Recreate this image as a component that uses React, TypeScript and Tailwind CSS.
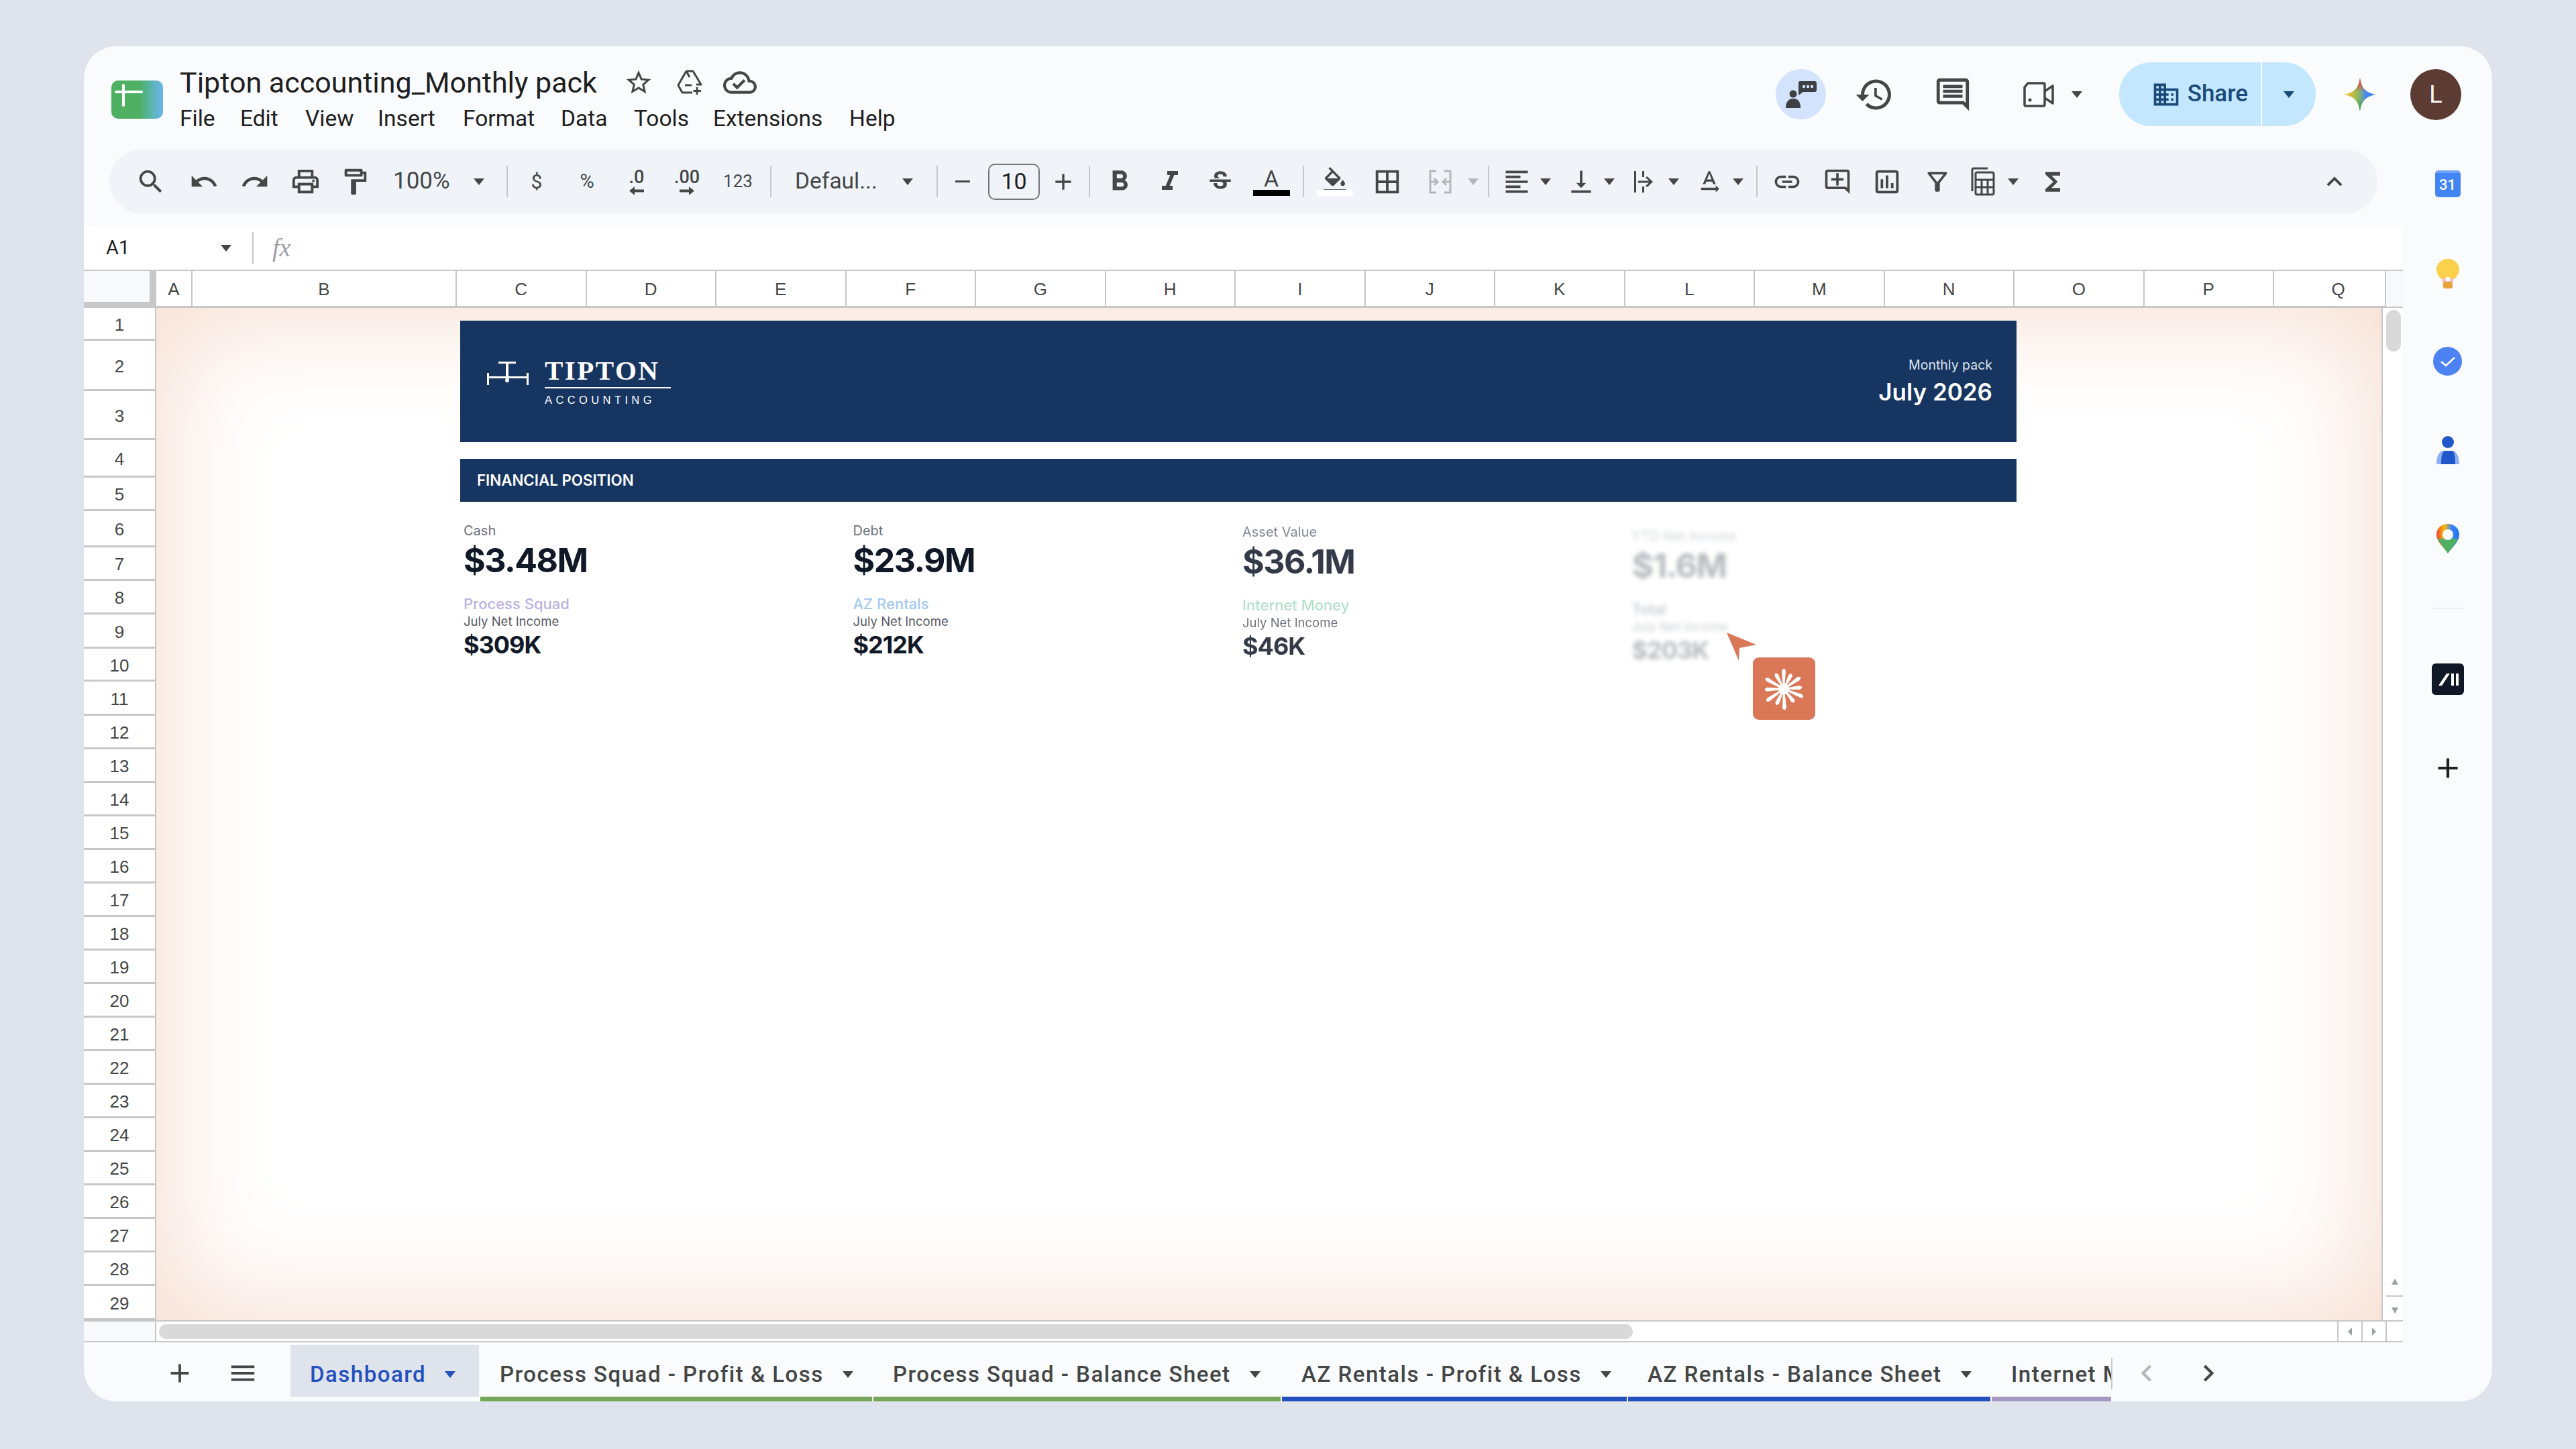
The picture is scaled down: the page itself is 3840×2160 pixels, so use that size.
import type { ReactNode } from "react"
import {
  MdAdd,
  MdBorderAll,
  MdChevronLeft,
  MdChevronRight,
  MdDomain,
  MdFormatAlignLeft,
  MdFormatBold,
  MdFormatColorFill,
  MdFormatItalic,
  MdFunctions,
  MdHistory,
  MdKeyboardArrowUp,
  MdLink,
  MdMenu,
  MdOutlineAddComment,
  MdOutlineCloudDone,
  MdOutlineComment,
  MdOutlineFilterAlt,
  MdOutlineFormatPaint,
  MdOutlineInsertChart,
  MdOutlinePrint,
  MdRedo,
  MdSearch,
  MdStarBorder,
  MdStrikethroughS,
  MdTextRotationNone,
  MdUndo,
  MdVerticalAlignBottom,
} from "react-icons/md"

const menu = [
  ["File", "w-[90px]"],
  ["Edit", "w-[97px]"],
  ["View", "w-[108px]"],
  ["Insert", "w-[127px]"],
  ["Format", "w-[146px]"],
  ["Data", "w-[109px]"],
  ["Tools", "w-[118px]"],
  ["Extensions", "w-[203px]"],
  ["Help", "w-[80px]"],
]

const columns = [
  ["A", "w-[54px]"],
  ["B", "w-[394px]"],
  ...["C", "D", "E", "F", "G", "H", "I", "J", "K", "L", "M", "N", "O", "P"].map((c) => [c, "w-[193.5px]"]),
  ["Q", "w-[167px] pl-[26px]"],
]

const rowHeights: Record<number, string> = {
  1: "h-[49px]",
  2: "h-[75px]",
  3: "h-[73px]",
  4: "h-[56px]",
  6: "h-[54px]",
  9: "h-[51px]",
  10: "h-[49px]",
  11: "h-[51px]",
  29: "h-[51px]",
}

const tabs = [
  { name: "Process Squad - Profit & Loss", box: "w-[584px]", bar: "border-[#76a658]" },
  { name: "Process Squad - Balance Sheet", box: "w-[607px]", bar: "border-[#76a658]" },
  { name: "AZ Rentals - Profit & Loss", box: "w-[514px]", bar: "border-[#2450bd]" },
  { name: "AZ Rentals - Balance Sheet", box: "w-[540px]", bar: "border-[#2450bd]" },
  { name: "Internet Money - Profit & Loss", box: "w-[600px]", bar: "border-[#a899c4]" },
]

function Caret({ className = "", color = "border-t-[#444746]" }: { className?: string; color?: string }) {
  return (
    <div className={`flex w-3 flex-none justify-center ${className}`}>
      <div className={`h-0 w-0 flex-none border-x-[8px] border-t-[10px] border-x-transparent ${color}`} />
    </div>
  )
}

function Sep({ className = "" }: { className?: string }) {
  return <div className={`h-[47px] w-[2px] flex-none bg-[#c7c7c7] ${className}`} />
}

function Tool({ className = "", children }: { className?: string; children: ReactNode }) {
  return <div className={`flex w-9 flex-none items-center justify-center text-[#444746] [&>svg]:shrink-0 ${className}`}>{children}</div>
}

function SmallArrow({ left }: { left?: boolean }) {
  return (
    <svg width="22" height="13" viewBox="0 0 22 13" className={left ? "" : "rotate-180"}>
      <path d="M0 6.5 L8 0 V4.5 H22 V8.5 H8 V13 Z" fill="#444746" />
    </svg>
  )
}

function WrapIcon() {
  return (
    <svg width="36" height="36" viewBox="0 0 36 36" fill="#444746">
      <rect x="3" y="2" width="3" height="32" />
      <rect x="15" y="2" width="3" height="9" />
      <rect x="15" y="25" width="3" height="9" />
      <path d="M9 16.5 H25 L20 11.5 L22.5 10 L31 18 L22.5 26 L20 24 L25 19.5 H9 Z" />
    </svg>
  )
}

function MergeIcon() {
  return (
    <svg width="36" height="40" viewBox="0 0 36 40" fill="none" stroke="#b4b7ba" strokeWidth="3">
      <path d="M12 4 H3 V36 H12 M24 4 H33 V36 H24" />
      <path d="M2 20 H14 M9 15 L14 20 L9 25 M34 20 H22 M27 15 L22 20 L27 25" />
    </svg>
  )
}

function CalcIcon() {
  return (
    <svg width="38" height="44" viewBox="0 0 38 44" fill="none" stroke="#444746" strokeWidth="3">
      <path d="M3 36 V4 Q3 2 5 2 H26" />
      <rect x="8" y="8" width="27" height="33" rx="2" />
      <path d="M8 19 H35 M8 30 H35 M17 19 V41 M26 19 V41" />
    </svg>
  )
}

function DriveAdd() {
  return (
    <svg width="40" height="40" viewBox="0 0 40 40" fill="none" stroke="#444746" strokeWidth="3" strokeLinejoin="round">
      <path d="M14 3 H24 L36 23 H29 M14 3 L2 24 L8 35 H23 M14 3 L19 12 M12 24 H22" />
      <path d="M30 27 V38 M24.5 32.5 H36" />
    </svg>
  )
}

function MeetIcon() {
  return (
    <svg width="48" height="40" viewBox="0 0 48 40" fill="none" stroke="#444746" strokeWidth="3.5" strokeLinejoin="round">
      <path d="M8 3 H31 Q33 3 33 5 V35 Q33 37 31 37 H5 Q3 37 3 35 V9 Z" />
      <path d="M33 15 L45 7 V33 L33 25" />
      <circle cx="11" cy="28" r="2.5" fill="#444746" stroke="none" />
    </svg>
  )
}

function ChatPerson() {
  return (
    <svg width="48" height="44" viewBox="0 0 48 44">
      <circle cx="12" cy="21" r="5.5" fill="#3c4043" />
      <path d="M1 42 C1 32 6 28 12 28 C19 28 23 32 23 42 Z" fill="#3c4043" />
      <path d="M22 2 H44 Q47 2 47 5 V15 Q47 18 44 18 H27 L20 23 V5 Q20 2 22 2 Z" fill="#3c4043" />
      <circle cx="28" cy="10" r="2.2" fill="#d3e3fd" />
      <circle cx="34" cy="10" r="2.2" fill="#d3e3fd" />
      <circle cx="40" cy="10" r="2.2" fill="#d3e3fd" />
    </svg>
  )
}

function Gemini() {
  const star = "M24 0 C26 15 32 22 48 25 C32 28 26 35 24 50 C22 35 16 28 0 25 C16 22 22 15 24 0 Z"
  return (
    <svg width="48" height="50" viewBox="0 0 48 50">
      <defs>
        <linearGradient id="gem-x" x1="0" y1="0" x2="1" y2="0">
          <stop offset="0.1" stopColor="#f2c230" />
          <stop offset="0.45" stopColor="#8fb85a" />
          <stop offset="0.7" stopColor="#4285f4" />
        </linearGradient>
        <linearGradient id="gem-y" x1="0" y1="0" x2="0" y2="1">
          <stop offset="0.08" stopColor="#ea4335" />
          <stop offset="0.42" stopColor="#ea4335" stopOpacity="0" />
          <stop offset="0.62" stopColor="#34a853" stopOpacity="0" />
          <stop offset="0.92" stopColor="#34a853" />
        </linearGradient>
      </defs>
      <path d={star} fill="url(#gem-x)" />
      <path d={star} fill="url(#gem-y)" />
    </svg>
  )
}

function SheetsLogo() {
  return (
    <div className="relative h-[57px] w-[77px] flex-none overflow-hidden rounded-[10px] bg-gradient-to-r from-[#4fb064] from-55% to-[#6cb4ee]">
      <div className="absolute left-[5px] top-[15px] h-[4px] w-[42px] rounded-sm bg-white" />
      <div className="absolute left-[16px] top-[5px] h-[34px] w-[4px] rounded-sm bg-white" />
    </div>
  )
}

function TiptonMark() {
  return (
    <svg width="62" height="38" viewBox="0 0 62 38" fill="white">
      <rect x="17" y="1" width="26" height="3" />
      <rect x="28" y="2" width="4" height="26" />
      <rect x="1" y="23" width="60" height="3" />
      <rect x="0" y="18" width="3" height="18" />
      <rect x="59" y="18" width="3" height="18" />
      <circle cx="30" cy="29" r="3" />
    </svg>
  )
}

function Burst() {
  const rays = [
    [0, 33],
    [27, 28],
    [55, 33],
    [85, 30],
    [112, 34],
    [142, 28],
    [178, 34],
    [205, 29],
    [235, 34],
    [268, 31],
    [300, 34],
    [332, 29],
  ]
  return (
    <svg width="70" height="70" viewBox="-35 -35 70 70">
      {rays.map(([a, r]) => (
        <path key={a} d={`M-1.4 -6 L-3 -${r - 6} Q0 -${r + 1} 3 -${r - 6} L1.4 -6 Z`} fill="white" transform={`rotate(${a})`} />
      ))}
      <circle r="8" fill="white" />
    </svg>
  )
}

function Metric({
  label,
  value,
  name,
  nameColor,
  income,
  className = "",
}: {
  label: string
  value: string
  name: string
  nameColor: string
  income: string
  className?: string
}) {
  return (
    <div className={`flex flex-col font-['Inter',sans-serif] ${className}`}>
      <div className="flex h-[24px] items-center text-[20px] text-[#6b7280]">{label}</div>
      <div className="flex h-[64px] items-center text-[50px] font-bold tracking-[-1.5px] text-[#111827]">{value}</div>
      <div className={`mt-[20px] flex h-[26px] items-center text-[22px] font-medium ${nameColor}`}>{name}</div>
      <div className="mt-[2px] flex h-[24px] items-center text-[18.5px] text-[#555b66]">July Net Income</div>
      <div className="flex h-[44px] items-center text-[36px] font-bold tracking-[-1px] text-[#111827]">{income}</div>
    </div>
  )
}

function Toolbar() {
  return (
    <div className="mx-[38px] flex h-[95px] flex-none items-center rounded-full bg-[#f0f4f9] pl-[44px] pr-[46px] font-['Roboto',sans-serif] text-[#444746]">
      <Tool><MdSearch size={46} /></Tool>
      <Tool className="ml-[43px]"><MdUndo size={44} /></Tool>
      <Tool className="ml-[40px]"><MdRedo size={44} /></Tool>
      <Tool className="ml-[39px]"><MdOutlinePrint size={47} /></Tool>
      <Tool className="ml-[38px]"><MdOutlineFormatPaint size={46} /></Tool>
      <div className="ml-[39px] w-[87px] flex-none text-[35px]">100%</div>
      <Caret className="ml-[35px]" />
      <Sep className="ml-[35px]" />
      <Tool className="ml-[25px] text-[30px]">$</Tool>
      <Tool className="ml-[39px] text-[29px]">%</Tool>
      <Tool className="ml-[38px]">
        <div className="flex flex-col items-center text-[27px] font-medium leading-[27px]">.0<SmallArrow left /></div>
      </Tool>
      <Tool className="ml-[39px]">
        <div className="flex flex-col items-center text-[27px] font-medium leading-[27px]">.00<SmallArrow /></div>
      </Tool>
      <Tool className="ml-[40px] text-[26px]">123</Tool>
      <Sep className="ml-[30px]" />
      <div className="ml-[35px] w-[125px] flex-none whitespace-nowrap text-[33.5px]">Defaul...</div>
      <Caret className="ml-[37px]" />
      <Sep className="ml-[37px]" />
      <Tool className="ml-[19px]"><div className="h-[3px] w-[22px] bg-[#444746]" /></Tool>
      <div className="ml-[20px] flex h-[54px] w-[77px] flex-none items-center justify-center rounded-[10px] border-2 border-[#747775] text-[34px] text-[#1f1f1f]">10</div>
      <Tool className="ml-[17px]"><MdAdd size={40} /></Tool>
      <Sep className="ml-[20px]" />
      <Tool className="ml-[26px]"><MdFormatBold size={50} /></Tool>
      <Tool className="ml-[39px]"><MdFormatItalic size={48} /></Tool>
      <Tool className="ml-[39px]"><MdStrikethroughS size={42} /></Tool>
      <Tool className="ml-[40px]">
        <div className="flex flex-col items-center">
          <div className="text-[34px] font-normal leading-[34px]">A</div>
          <div className="h-[9px] w-[55px] flex-none bg-black" />
        </div>
      </Tool>
      <Sep className="ml-[29px]" />
      <Tool className="ml-[28px]">
        <div className="flex flex-col items-center">
          <div className="h-[34px] overflow-hidden"><MdFormatColorFill size={40} /></div>
          <div className="h-[9px] w-[54px] flex-none bg-white" />
        </div>
      </Tool>
      <Tool className="ml-[42px]"><MdBorderAll size={46} /></Tool>
      <Tool className="ml-[43px]"><MergeIcon /></Tool>
      <Caret className="ml-[25px]" color="border-t-[#b4b7ba]" />
      <Sep className="ml-[16px]" />
      <Tool className="ml-[23px]"><MdFormatAlignLeft size={44} /></Tool>
      <Caret className="ml-[19px]" />
      <Tool className="ml-[29px]"><MdVerticalAlignBottom size={44} /></Tool>
      <Caret className="ml-[18px]" />
      <Tool className="ml-[28px]"><WrapIcon /></Tool>
      <Caret className="ml-[20px]" />
      <Tool className="ml-[29px]"><MdTextRotationNone size={42} /></Tool>
      <Caret className="ml-[19px]" />
      <Sep className="ml-[21px]" />
      <Tool className="ml-[26px]"><MdLink size={44} /></Tool>
      <Tool className="ml-[39px]"><MdOutlineAddComment size={44} /></Tool>
      <Tool className="ml-[38px]"><MdOutlineInsertChart size={46} /></Tool>
      <Tool className="ml-[39px]"><MdOutlineFilterAlt size={44} /></Tool>
      <Tool className="ml-[32px]"><CalcIcon /></Tool>
      <Caret className="ml-[21px]" />
      <Tool className="ml-[35px]"><MdFunctions size={44} /></Tool>
      <Tool className="ml-auto"><MdKeyboardArrowUp size={46} /></Tool>
    </div>
  )
}

function Grid() {
  const rows = Array.from({ length: 29 }, (_, i) => i + 1)
  return (
    <div className="flex flex-1 flex-col bg-white font-['Liberation_Sans',sans-serif] text-[26px] text-[#444746]">
      <div className="flex h-[57px] flex-none border-t-2 border-[#c7c7c7]">
        <div className="h-full w-[108px] flex-none border-b-[9px] border-r-[10px] border-[#c7c7c7] bg-[#f8f9fa]" />
        {columns.map(([c, w]) => (
          <div key={c} className={`flex flex-none items-center justify-center border-b-[3px] border-r-2 border-[#c7c7c7] pt-[2px] ${w}`}>{c}</div>
        ))}
        <div className="flex-1 border-b-[2px] border-[#c7c7c7] bg-[#f8f9fa]" />
      </div>
      <div className="flex flex-1">
        <div className="flex w-[108px] flex-none flex-col border-r-[2px] border-[#c7c7c7]">
          {rows.map((r) => (
            <div key={r} className={`flex flex-none items-center justify-center border-b-[3px] border-[#c7c7c7] pt-[4px] ${rowHeights[r] ?? "h-[50px]"}`}>{r}</div>
          ))}
        </div>
        <Sheet />
        <div className="relative w-[32px] flex-none border-l-2 border-[#c7c7c7] bg-white">
          <div className="ml-[5px] mt-[3px] h-[62px] w-[22px] rounded-full bg-[#d9d9d9]" />
          <div className="absolute bottom-[10px] left-[5px] flex w-[25px] flex-col items-center gap-[16px]">
            <div className="h-0 w-0 border-x-[5px] border-b-[9px] border-x-transparent border-b-[#9aa0a6]" />
            <div className="h-[2px] w-[25px] bg-[#c7c7c7]" />
            <div className="h-0 w-0 border-x-[5px] border-t-[9px] border-x-transparent border-t-[#9aa0a6]" />
          </div>
        </div>
      </div>
    </div>
  )
}

function Sheet() {
  return (
    <div className="min-w-0 flex-1 bg-white pl-[453px] pt-[19px] shadow-[inset_0_0_170px_10px_#f6dccf]">
      <div className="w-[2320px]">
        <div className="flex h-[181px] items-center justify-between bg-[#163560] pl-[40px] pr-[36px] text-white">
          <div className="flex items-start pb-[2px]">
            <div className="pt-[8px]"><TiptonMark /></div>
            <div className="ml-[24px] flex w-[188px] flex-col">
              <div className="border-b-2 border-white pb-[3px] font-['Liberation_Serif',serif] text-[41px] font-bold leading-[44px] tracking-[2.5px]">TIPTON</div>
              <div className="mt-[8px] font-['Liberation_Sans',sans-serif] text-[16.5px] leading-[18px] tracking-[5.4px]">ACCOUNTING</div>
            </div>
          </div>
          <div className="flex flex-col items-end font-['Inter',sans-serif]">
            <div className="text-[19.5px] leading-[24px] text-[#dbe3ee]">Monthly pack</div>
            <div className="mt-[6px] text-[35px] font-semibold leading-[44px]">July 2026</div>
          </div>
        </div>
        <div className="mt-[25px] flex h-[64px] items-center bg-[#163560] pl-[25px] font-['Inter',sans-serif] text-[22.3px] font-semibold text-white">FINANCIAL POSITION</div>
        <div className="grid grid-cols-[repeat(4,580.5px)] pl-[5px] pt-[31px]">
          <Metric label="Cash" value="$3.48M" name="Process Squad" nameColor="text-[#b9b1e3]" income="$309K" />
          <Metric label="Debt" value="$23.9M" name="AZ Rentals" nameColor="text-[#a3c9ee]" income="$212K" />
          <Metric label="Asset Value" value="$36.1M" name="Internet Money" nameColor="text-[#a6dcc3]" income="$46K" className="pt-[2px] opacity-85 blur-[0.6px]" />
          <div className="relative pt-[8px]">
            <Metric label="YTD Net Income" value="$1.6M" name="Total" nameColor="text-[#374151]" income="$203K" className="opacity-30 blur-[3px]" />
            <svg width="44" height="42" viewBox="0 0 44 42" className="absolute left-[141px] top-[164px]">
              <path d="M0 0 L44 18 L19 23 L18 42 Z" fill="#d97757" />
            </svg>
            <div className="absolute left-[180px] top-[201px] flex h-[93px] w-[93px] items-center justify-center rounded-[9px] bg-[#d97757]">
              <Burst />
            </div>
          </div>
        </div>
      </div>
    </div>
  )
}

function SideBar() {
  return (
    <div className="flex w-[133px] flex-none flex-col items-center pt-[31px]">
      <div className="flex h-[40px] w-[38px] items-center justify-center rounded-[5px] border-t-4 border-[#6fa3f7] bg-[#4285f4] font-['Roboto',sans-serif] text-[22px] font-medium leading-none text-white">31</div>
      <svg width="34" height="44" viewBox="0 0 34 44" className="mt-[92px]">
        <path d="M17 0 C27 0 34 7 34 16 C34 22 30 26 27 30 H7 C4 26 0 22 0 16 C0 7 7 0 17 0 Z" fill="#fbd04b" />
        <rect x="9" y="29" width="16" height="6" fill="#f6b9c6" />
        <rect x="10" y="34" width="14" height="10" rx="3" fill="#e8a33a" />
        <circle cx="17" cy="30" r="3.5" fill="#fff" />
      </svg>
      <svg width="43" height="43" viewBox="0 0 43 43" className="mt-[87px]">
        <circle cx="21.5" cy="21.5" r="21.5" fill="#4d82f3" />
        <path d="M12 22 L19 28 L32 16" stroke="#fff" strokeWidth="2.5" fill="none" />
      </svg>
      <svg width="34" height="42" viewBox="0 0 34 42" className="mt-[90px]">
        <circle cx="17" cy="9" r="9" fill="#2158c9" />
        <path d="M0 42 C0 30 4 22 11 22 H23 C30 22 34 30 34 42 Z" fill="#8ab0f5" />
        <path d="M7 42 C7 29 9 22 13 22 H24 C27 24 28 32 28 42 Z" fill="#2158c9" />
      </svg>
      <svg width="34" height="44" viewBox="0 0 34 44" className="mt-[89px]">
        <defs>
          <linearGradient id="pin" x1="0" y1="0" x2="1" y2="0">
            <stop offset="0" stopColor="#ea4335" />
            <stop offset="0.35" stopColor="#fbbc04" />
            <stop offset="0.65" stopColor="#4285f4" />
            <stop offset="1" stopColor="#1a73e8" />
          </linearGradient>
        </defs>
        <path d="M17 0 C27 0 34 7 34 16 C34 26 25 33 17 44 C9 33 0 26 0 16 C0 7 7 0 17 0 Z" fill="url(#pin)" />
        <path d="M2 22 C5 29 11 35 17 44 C23 35 29 29 32 22 Z" fill="#4fb064" />
        <circle cx="17" cy="16" r="8" fill="#f9fbfd" />
      </svg>
      <div className="mt-[81px] h-[1px] w-[48px] bg-[#dadce0]" />
      <svg width="48" height="47" viewBox="0 0 48 47" className="mt-[82px]">
        <rect width="48" height="47" rx="6" fill="#101828" />
        <path d="M10 33 L22 15 H27 L15 33 Z M29 15 H33 V33 H29 Z M36 15 H40 V33 H36 Z" fill="#fff" />
      </svg>
      <div className="mt-[84px] text-[#1f1f1f]"><MdAdd size={50} /></div>
    </div>
  )
}

function Tabs() {
  return (
    <div className="flex h-[84px] flex-none items-center font-['Roboto',sans-serif] text-[#444746]">
      <Tool className="ml-[123px] w-[40px]"><MdAdd size={46} /></Tool>
      <Tool className="ml-[54px] w-[40px]"><MdMenu size={46} /></Tool>
      <div className="ml-[51px] flex h-full w-[2714px] flex-none gap-[2px] self-stretch overflow-hidden text-[33px] font-medium tracking-[1.5px]">
        <div className="flex h-[77px] w-[281px] flex-none items-center bg-[#dfe3eb] pl-[29px] pt-[10px] text-[#2450bd]">
          Dashboard
          <Caret className="ml-[30px]" color="border-t-[#2450bd]" />
        </div>
        {tabs.map((t) => (
          <div key={t.name} className={`flex h-[84px] flex-none items-center whitespace-nowrap border-b-[7px] pl-[29px] pt-[10px] ${t.box} ${t.bar}`}>
            {t.name}
            <Caret className="ml-[30px]" />
          </div>
        ))}
      </div>
      <Sep />
      <Tool className="ml-[31px] w-[40px] text-[#b4b7ba]"><MdChevronLeft size={50} /></Tool>
      <Tool className="ml-[52px] w-[40px]"><MdChevronRight size={50} /></Tool>
    </div>
  )
}

export default function App() {
  return (
    <div className="flex h-[2160px] w-[3840px] overflow-hidden bg-[#dfe4ec] pl-[125px] pt-[69px]">
      <div className="flex h-[2020px] w-[3590px] flex-col overflow-hidden rounded-[48px] bg-[#f9fbfd]">
        <div className="flex h-[154px] flex-none items-start font-['Roboto',sans-serif] text-[#1f1f1f]">
          <div className="ml-[41px] mt-[51px]"><SheetsLogo /></div>
          <div className="ml-[25px] mt-[28px] flex flex-col">
            <div className="flex h-[52px] items-center">
              <div className="w-[621px] flex-none whitespace-nowrap text-[43px] leading-none">Tipton accounting_Monthly pack</div>
              <Tool className="ml-[43px] w-[40px]"><MdStarBorder size={44} /></Tool>
              <Tool className="ml-[37px] w-[40px]"><DriveAdd /></Tool>
              <Tool className="ml-[34px] w-[40px]"><MdOutlineCloudDone size={50} /></Tool>
            </div>
            <div className="mt-[8px] flex h-[40px] items-center text-[33.5px]">
              {menu.map(([m, w]) => (
                <div key={m} className={`flex-none ${w}`}>{m}</div>
              ))}
            </div>
          </div>
          <div className="ml-auto mr-[46px] mt-[24px] flex h-[95px] items-center">
            <div className="flex h-[75px] w-[75px] items-center justify-center rounded-full bg-[#d3e3fd]"><ChatPerson /></div>
            <Tool className="ml-[48px] w-[48px]"><MdHistory size={60} /></Tool>
            <Tool className="ml-[69px] w-[48px]"><MdOutlineComment size={58} /></Tool>
            <Tool className="ml-[80px] w-[48px]"><MeetIcon /></Tool>
            <Caret className="ml-[27px]" />
            <div className="ml-[57px] flex h-[95px] w-[293px] items-center rounded-full bg-[#c2e7ff] text-[#1b4a78]">
              <div className="flex h-full w-[213px] items-center justify-end gap-[10px] border-r-2 border-[#f9fbfd] pr-[19px]">
                <MdDomain size={44} />
                <span className="text-[35px] font-medium">Share</span>
              </div>
              <div className="flex flex-1 justify-center"><Caret color="border-t-[#1b4a78]" /></div>
            </div>
            <div className="ml-[42px] w-[48px]"><Gemini /></div>
            <div className="ml-[51px] flex h-[76px] w-[76px] items-center justify-center rounded-full bg-[#5b3b32] text-[36px] text-white">L</div>
          </div>
        </div>
        <div className="flex min-h-0 flex-1">
          <div className="flex min-w-0 flex-1 flex-col">
            <Toolbar />
            <div className="mt-[19px] flex h-[65px] flex-none items-center bg-white pl-[33px] font-['Roboto',sans-serif] text-[29px] text-[#1f1f1f]">
              <div className="w-[173px] flex-none">A1</div>
              <Caret />
              <Sep className="ml-[33px]" />
              <div className="ml-[28px] font-['Liberation_Serif',serif] text-[38px] italic text-[#9aa0a6]">fx</div>
            </div>
            <Grid />
            <div className="flex h-[37px] flex-none flex-col">
              <div className="flex h-[33px] items-center border-y-2 border-[#c7c7c7] bg-white">
                <div className="h-full w-[108px] flex-none border-r-2 border-[#c7c7c7] bg-[#f8f9fa]" />
                <div className="ml-[4px] h-[22px] w-[2197px] flex-none rounded-full bg-[#d9d9d9]" />
                <div className="ml-auto flex h-full">
                  <div className="flex w-[36px] items-center justify-center border-l-2 border-[#c7c7c7]"><div className="h-0 w-0 border-y-[6px] border-r-[6px] border-y-transparent border-r-[#9aa0a6]" /></div>
                  <div className="flex w-[36px] items-center justify-center border-l-2 border-[#c7c7c7]"><div className="h-0 w-0 border-y-[6px] border-l-[6px] border-y-transparent border-l-[#9aa0a6]" /></div>
                  <div className="w-[26px] border-l-2 border-[#c7c7c7]" />
                </div>
              </div>
            </div>
          </div>
          <SideBar />
        </div>
        <Tabs />
      </div>
    </div>
  )
}
